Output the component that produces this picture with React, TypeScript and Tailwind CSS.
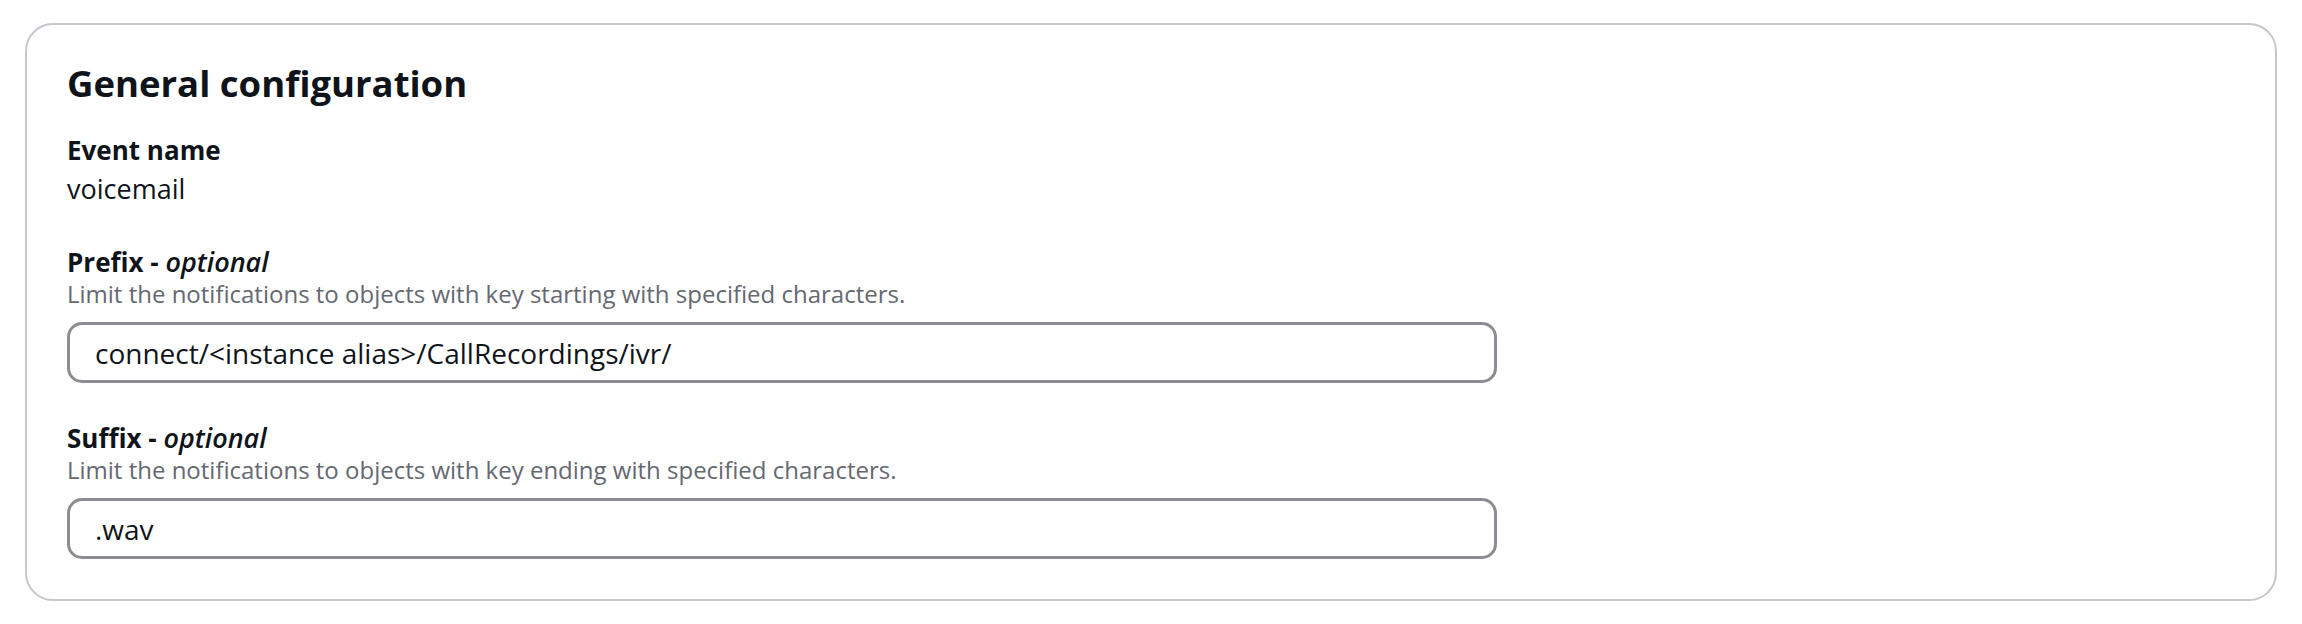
import React from 'react';

const font = { fontFamily: '"Open Sans", "Noto Sans", sans-serif' };

interface FieldProps {
  label: string;
  description: string;
  value: string;
}

const OptionalField: React.FC<FieldProps> = ({ label, description, value }) => {
  return (
    <div className="mt-[42px]">
      <div className="text-[26px] leading-[26px] font-bold text-[#0f141a]">
        {label} - <i className="text-[27px] font-semibold">optional</i>
      </div>
      <div className="mt-[6px] text-[24px] leading-[26px] text-[#656871]">{description}</div>
      <div className="mt-[15px] w-[1430px] h-[61px] border-[3px] border-[#8c8c94] rounded-[15px] flex items-center pl-[25px]">
        <span className="text-[28px] text-[#0f141a]">{value}</span>
      </div>
    </div>
  );
};

const App: React.FC = () => {
  return (
    <div className="min-h-screen bg-white pt-[23px] px-[25px] pb-[22px]" style={font}>
      <div className="border-2 border-[#c6c6cd] rounded-[28px] pt-[36px] px-[40px] pb-[40px]">
        <h2 className="text-[36.5px] leading-[44px] font-bold text-[#0f141a]">General configuration</h2>

        <div className="mt-[29px]">
          <div className="text-[26px] leading-[32px] font-bold text-[#0f141a]">Event name</div>
          <div className="mt-[5px] text-[27px] leading-[36px] text-[#0f141a]">voicemail</div>
        </div>

        <OptionalField
          label="Prefix"
          description="Limit the notifications to objects with key starting with specified characters."
          value="connect/<instance alias>/CallRecordings/ivr/"
        />
        <OptionalField
          label="Suffix"
          description="Limit the notifications to objects with key ending with specified characters."
          value=".wav"
        />
      </div>
    </div>
  );
};

export default App;
